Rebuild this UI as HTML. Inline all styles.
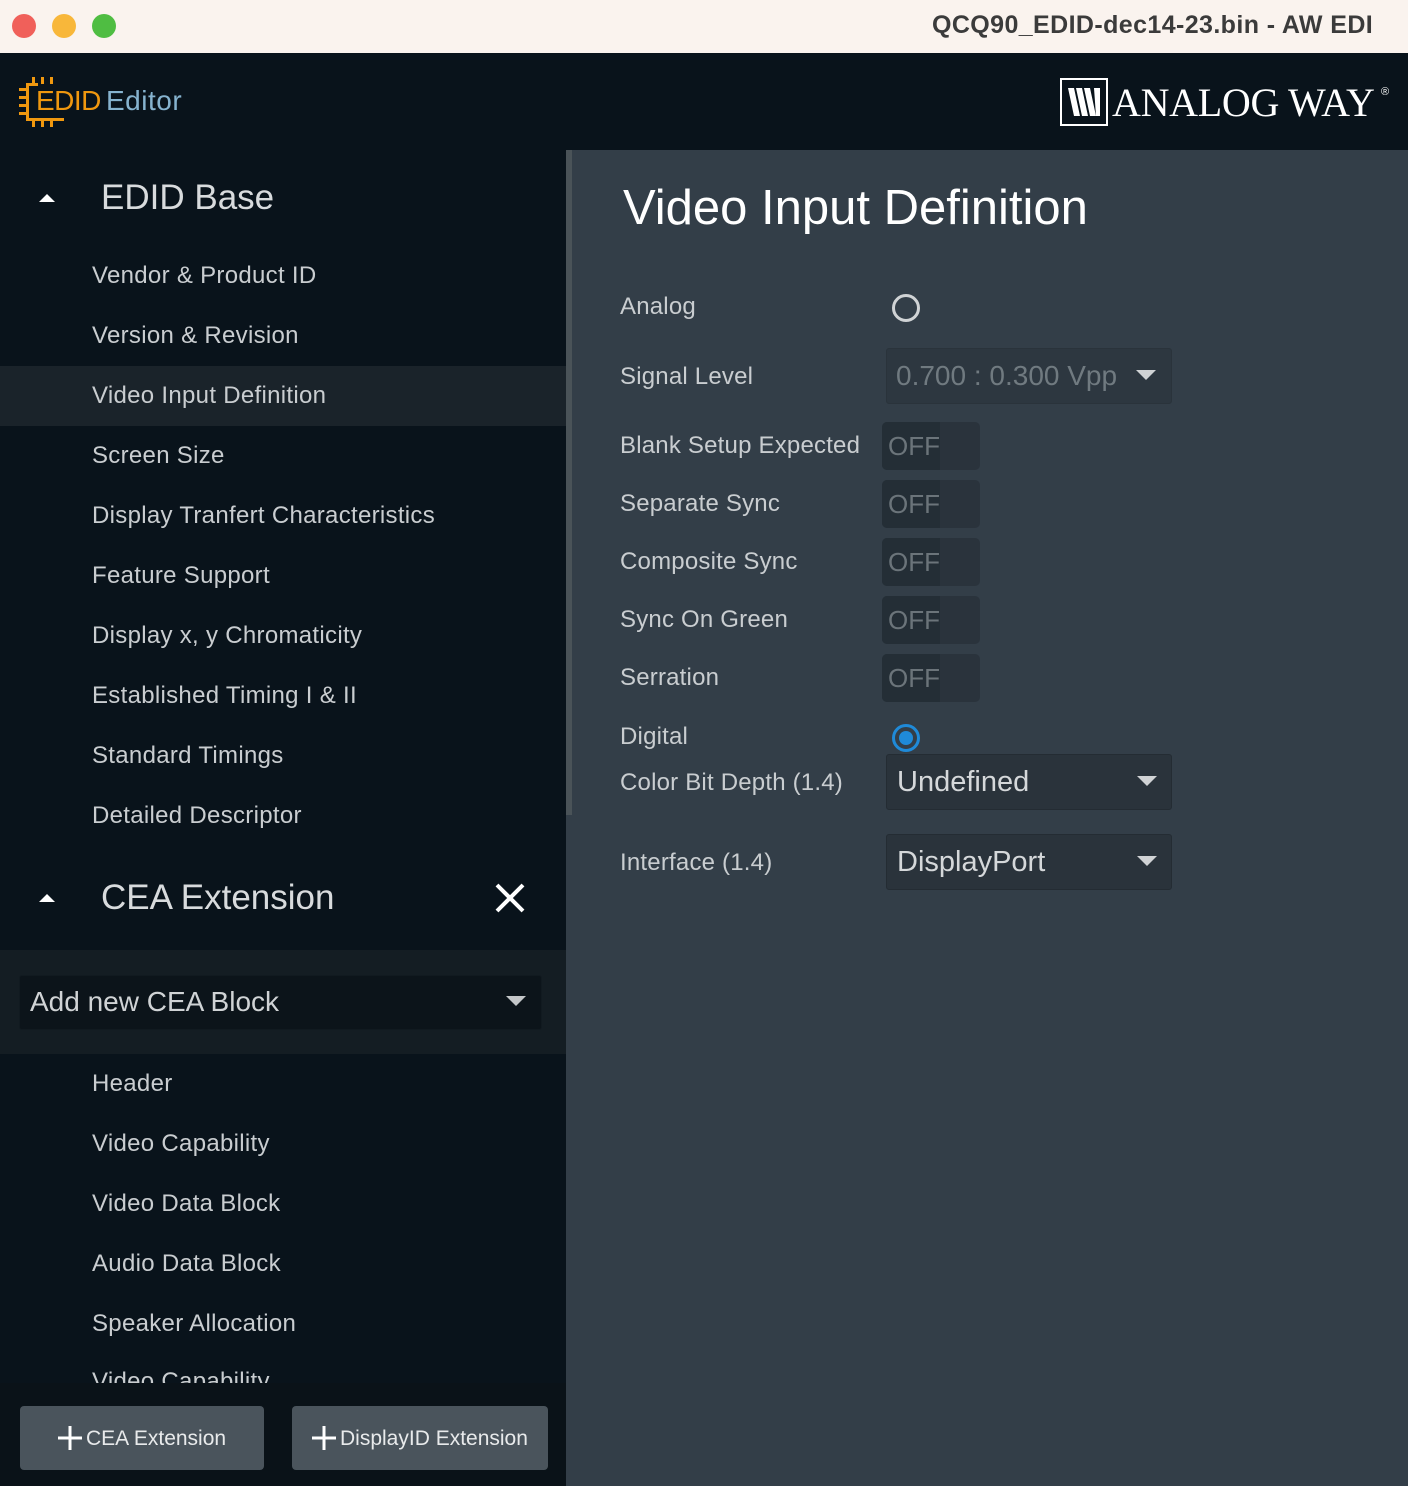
<!DOCTYPE html>
<html><head><meta charset="utf-8"><style>
*{margin:0;padding:0;box-sizing:border-box}
body{width:1408px;height:1486px;overflow:hidden;background:#333e48;font-family:"Liberation Sans",sans-serif;position:relative}
.a{position:absolute;white-space:nowrap}
.tb{left:0;top:0;width:1408px;height:53px;background:#faf3ee}
.dot{width:24px;height:24px;border-radius:50%;top:14px}
.hdr{left:0;top:53px;width:1408px;height:97px;background:#09131b}
.side{left:0;top:150px;width:566px;height:1336px;background:#09131b}
.it{left:92px;font-size:24px;color:#c9cdd0;letter-spacing:0.3px}
.sec{font-size:35px;color:#d8dbdd}
.lbl{left:620px;font-size:24px;color:#c9cdd0;letter-spacing:0.2px}
.tog{left:882px;width:98px;height:48px;border-radius:5px;background:#2a333c}
.tog i{position:absolute;left:0;top:0;width:58px;height:48px;background:#242e36;border-radius:5px 0 0 5px}
.tog span{position:absolute;left:6px;top:9px;font-size:26px;color:#6b747a}
.sel{left:886px;width:286px;height:56px;background:#2a333b;border:1px solid #242c33;border-radius:3px}
.sel span{position:absolute;left:10px;top:11px;font-size:29px;color:#d5d8da}
.tri{position:absolute;width:0;height:0;border-left:10px solid transparent;border-right:10px solid transparent;border-top:10px solid #d0d3d5}
.btn{top:1406px;height:64px;background:#4a545c;border-radius:4px;color:#e8eaeb;font-size:21px}
</style></head><body>
<div class="a tb"></div>
<div class="a dot" style="left:12px;background:#f0605a"></div>
<div class="a dot" style="left:52px;background:#f8b73a"></div>
<div class="a dot" style="left:92px;background:#4fbd42"></div>
<div class="a" style="left:932px;top:11px;font-size:25px;font-weight:bold;color:#3b3b3b;letter-spacing:0.4px">QCQ90_EDID-dec14-23.bin - AW EDI</div>
<div class="a hdr"></div>
<svg class="a" style="left:18px;top:77px" width="46" height="50" viewBox="0 0 46 50"><g fill="#f0980f"><rect x="8" y="6" width="3" height="38"/><rect x="8" y="6" width="12" height="3"/><rect x="8" y="41" width="38" height="3"/><rect x="14" y="0" width="3" height="7"/><rect x="23" y="0" width="3" height="7"/><rect x="32" y="0" width="3" height="7"/><rect x="14" y="43" width="3" height="7"/><rect x="23" y="43" width="3" height="7"/><rect x="32" y="43" width="3" height="7"/><rect x="1" y="11" width="8" height="3"/><rect x="1" y="19" width="8" height="3"/><rect x="1" y="27" width="8" height="3"/><rect x="1" y="35" width="8" height="3"/></g></svg>
<div class="a" style="left:36px;top:85px;font-size:28px;color:#f0980f;letter-spacing:-0.5px">EDID</div>
<div class="a" style="left:106px;top:85px;font-size:28px;color:#86b3cf;letter-spacing:0.5px">Editor</div>
<div class="a" style="left:1060px;top:78px;width:48px;height:48px;border:2px solid #fff"></div>
<svg class="a" style="left:1066px;top:86px" width="36" height="32" viewBox="0 0 36 32"><path d="M2 2h6l6 28h-6zM10 2h6l6 28h-6zM18 2h6l6 28h-6zM28 2h6v28h-4z" fill="#fff"/></svg>
<div class="a" style="left:1112px;top:79px;font-family:'Liberation Serif',serif;font-size:40px;color:#fff;letter-spacing:-0.3px">ANALOG WAY</div>
<div class="a" style="left:1381px;top:86px;font-size:11px;color:#fff">®</div>
<div class="a side"></div>
<div class="a" style="left:566px;top:150px;width:6px;height:665px;background:#4a5358"></div>
<div class="a" style="left:566px;top:815px;width:6px;height:671px;background:#333e48"></div>
<div class="a" style="left:0;top:366px;width:566px;height:60px;background:#1a232a"></div>
<div class="a tri" style="left:39px;top:194px;border-top:0;border-bottom:8px solid #fff;border-left-width:8px;border-right-width:8px"></div>
<div class="a sec" style="left:101px;top:178px">EDID Base</div>
<div class="a it" style="top:262px">Vendor &amp; Product ID</div>
<div class="a it" style="top:322px">Version &amp; Revision</div>
<div class="a it" style="top:382px">Video Input Definition</div>
<div class="a it" style="top:442px">Screen Size</div>
<div class="a it" style="top:502px">Display Tranfert Characteristics</div>
<div class="a it" style="top:562px">Feature Support</div>
<div class="a it" style="top:622px">Display x, y Chromaticity</div>
<div class="a it" style="top:682px">Established Timing I &amp; II</div>
<div class="a it" style="top:742px">Standard Timings</div>
<div class="a it" style="top:802px">Detailed Descriptor</div>
<div class="a tri" style="left:39px;top:894px;border-top:0;border-bottom:8px solid #fff;border-left-width:8px;border-right-width:8px"></div>
<div class="a sec" style="left:101px;top:878px">CEA Extension</div>
<svg class="a" style="left:494px;top:882px" width="32" height="32"><path d="M3 3L29 29M29 3L3 29" stroke="#fff" stroke-width="4"/></svg>
<div class="a" style="left:0;top:950px;width:566px;height:104px;background:#141d23"></div>
<div class="a" style="left:19px;top:975px;width:523px;height:55px;background:#0c141a;border:1px solid #111a20;border-radius:3px"></div>
<div class="a" style="left:30px;top:986px;font-size:28px;color:#d0d3d5">Add new CEA Block</div>
<div class="a tri" style="left:506px;top:996px;border-top-color:#c4c7c9"></div>
<div class="a it" style="top:1070px">Header</div>
<div class="a it" style="top:1130px">Video Capability</div>
<div class="a it" style="top:1190px">Video Data Block</div>
<div class="a it" style="top:1250px">Audio Data Block</div>
<div class="a it" style="top:1310px">Speaker Allocation</div>
<div class="a it" style="top:1368px">Video Capability</div>
<div class="a" style="left:0;top:1383px;width:566px;height:103px;background:#0a1218"></div>
<div class="a btn" style="left:20px;width:244px"><svg class="a" style="left:38px;top:20px" width="24" height="24"><path d="M12 0v24M0 12h24" stroke="#fff" stroke-width="3"/></svg><span class="a" style="left:66px;top:21px">CEA Extension</span></div>
<div class="a btn" style="left:292px;width:256px"><svg class="a" style="left:20px;top:20px" width="24" height="24"><path d="M12 0v24M0 12h24" stroke="#fff" stroke-width="3"/></svg><span class="a" style="left:48px;top:21px">DisplayID Extension</span></div>
<div class="a" style="left:623px;top:180px;font-size:49px;color:#fff;font-weight:300">Video Input Definition</div>
<div class="a lbl" style="top:293px">Analog</div>
<div class="a" style="left:892px;top:294px;width:28px;height:28px;border-radius:50%;border:3px solid #d0d3d5"></div>
<div class="a lbl" style="top:363px">Signal Level</div>
<div class="a" style="left:886px;top:348px;width:286px;height:56px;background:#2d3740;border:1px solid #2a333b;border-radius:3px"></div>
<div class="a" style="left:896px;top:360px;font-size:28px;color:#707a80">0.700 : 0.300 Vpp</div>
<div class="a tri" style="left:1136px;top:370px"></div>
<div class="a lbl" style="top:432px">Blank Setup Expected</div>
<div class="a tog" style="top:422px"><i></i><span>OFF</span></div>
<div class="a lbl" style="top:490px">Separate Sync</div>
<div class="a tog" style="top:480px"><i></i><span>OFF</span></div>
<div class="a lbl" style="top:548px">Composite Sync</div>
<div class="a tog" style="top:538px"><i></i><span>OFF</span></div>
<div class="a lbl" style="top:606px">Sync On Green</div>
<div class="a tog" style="top:596px"><i></i><span>OFF</span></div>
<div class="a lbl" style="top:664px">Serration</div>
<div class="a tog" style="top:654px"><i></i><span>OFF</span></div>
<div class="a lbl" style="top:723px">Digital</div>
<div class="a" style="left:892px;top:724px;width:28px;height:28px;border-radius:50%;border:3px solid #1f8ad8"></div>
<div class="a" style="left:899px;top:731px;width:14px;height:14px;border-radius:50%;background:#1f8ad8"></div>
<div class="a lbl" style="top:769px">Color Bit Depth (1.4)</div>
<div class="a sel" style="top:754px"><span>Undefined</span><i class="tri" style="left:250px;top:21px"></i></div>
<div class="a lbl" style="top:849px">Interface (1.4)</div>
<div class="a sel" style="top:834px"><span>DisplayPort</span><i class="tri" style="left:250px;top:21px"></i></div>
</body></html>
